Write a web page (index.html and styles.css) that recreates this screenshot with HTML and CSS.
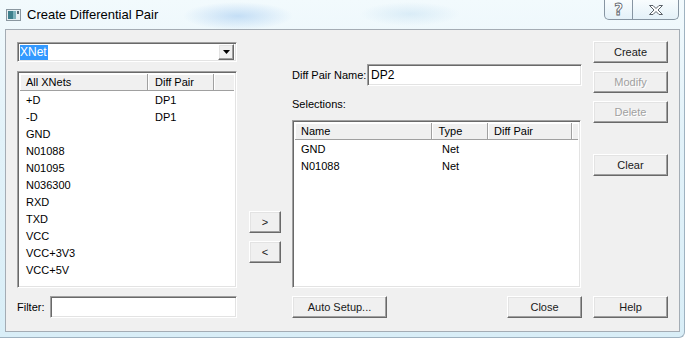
FILE: index.html
```html
<!DOCTYPE html>
<html>
<head>
    <link rel="stylesheet" href="styles.css">
</head>
<body>
    <div class="window">
        <div class="titlebar">
            <svg class="app-icon" width="15" height="12" viewBox="0 0 15 12">
                <rect x="0.5" y="0.5" width="14" height="11" fill="#e8eef2" stroke="#8a97a0"/>
                <rect x="2" y="2" width="5" height="8" fill="#3f7f8c"/>
                <rect x="7" y="2" width="3" height="8" fill="#7fb2bc"/>
                <rect x="11" y="2" width="2" height="3" fill="#5b6d78"/>
            </svg>
            <span class="title">Create Differential Pair</span>
            <div class="caption-buttons">
                <div class="cap-btn cap-help">?</div>
                <div class="cap-btn cap-close">
                    <svg width="16" height="12" viewBox="0 0 16 12">
                        <path d="M1.5 1.5 H5 L8 4.5 L11 1.5 H14.5 L10 6 L14.5 10.5 H11 L8 7.5 L5 10.5 H1.5 L6 6 Z" fill="#fff" stroke="#5a6168" stroke-width="1"/>
                    </svg>
                </div>
            </div>
        </div>

        <div class="client">
            <div class="col-left">
                <div class="combo sunken">
                    <span class="combo-text"><span class="selected">XNet</span></span>
                    <div class="combo-arrow raised">
                        <svg width="7" height="4" viewBox="0 0 7 4"><path d="M0 0 H7 L3.5 4 Z" fill="#000"/></svg>
                    </div>
                </div>

                <div class="listbox xnet-list sunken">
                    <div class="list-header">
                        <div class="hcell c-net">All XNets</div>
                        <div class="hcell c-pair">Diff Pair</div>
                        <div class="hcell c-fill"></div>
                    </div>
                    <div class="list-rows">
                        <div class="row"><span class="c-net">+D</span><span class="c-pair">DP1</span></div>
                        <div class="row"><span class="c-net">-D</span><span class="c-pair">DP1</span></div>
                        <div class="row"><span class="c-net">GND</span></div>
                        <div class="row"><span class="c-net">N01088</span></div>
                        <div class="row"><span class="c-net">N01095</span></div>
                        <div class="row"><span class="c-net">N036300</span></div>
                        <div class="row"><span class="c-net">RXD</span></div>
                        <div class="row"><span class="c-net">TXD</span></div>
                        <div class="row"><span class="c-net">VCC</span></div>
                        <div class="row"><span class="c-net">VCC+3V3</span></div>
                        <div class="row"><span class="c-net">VCC+5V</span></div>
                    </div>
                </div>

                <div class="filter-row">
                    <label class="filter-label">Filter:</label>
                    <div class="textbox filter-box sunken"></div>
                </div>
            </div>

            <div class="col-mid">
                <button class="btn small-btn raised">&gt;</button>
                <button class="btn small-btn raised">&lt;</button>
            </div>

            <div class="col-right">
                <div class="name-row">
                    <label class="name-label">Diff Pair Name:</label>
                    <div class="textbox name-box sunken">DP2</div>
                </div>
                <div class="sel-label">Selections:</div>

                <div class="listbox sel-list sunken">
                    <div class="list-header">
                        <div class="hcell c-name">Name</div>
                        <div class="hcell c-type">Type</div>
                        <div class="hcell c-spair">Diff Pair</div>
                        <div class="hcell c-fill"></div>
                    </div>
                    <div class="list-rows">
                        <div class="row"><span class="c-name">GND</span><span class="c-type">Net</span></div>
                        <div class="row"><span class="c-name">N01088</span><span class="c-type">Net</span></div>
                    </div>
                </div>

                <div class="bottom-row">
                    <button class="btn auto-btn raised">Auto Setup...</button>
                    <button class="btn raised">Close</button>
                </div>
            </div>

            <div class="col-buttons">
                <button class="btn raised">Create</button>
                <button class="btn raised" disabled>Modify</button>
                <button class="btn raised" disabled>Delete</button>
                <button class="btn clear-btn raised">Clear</button>
                <button class="btn help-btn raised">Help</button>
            </div>
        </div>
    </div>
</body>
</html>
```

FILE: styles.css
```css
body {
    margin: 0;
    width: 685px;
    height: 338px;
    overflow: hidden;
    font-family: 'Liberation Sans', Arial, sans-serif;
    font-size: 11px;
    color: #000;
}
.window {
    width: 685px;
    height: 338px;
    box-sizing: border-box;
    background:
        radial-gradient(ellipse 55px 14px at 238px 16px, rgba(160, 200, 240, 0.55), rgba(160, 200, 240, 0) 100%),
        radial-gradient(ellipse 50px 12px at 410px 14px, rgba(190, 220, 240, 0.45), rgba(190, 220, 240, 0) 100%),
        linear-gradient(180deg, #f2fafd 0%, #e2f2f9 40%, #d9eef7 100%);
    border-right: 1px solid #9fb2c0;
    border-bottom: 1px solid #9fb2c0;
    border-bottom-right-radius: 6px;
}

/* Title bar */
.titlebar {
    height: 29px;
    display: flex;
    align-items: flex-start;
    padding-left: 6px;
}
.app-icon {
    margin-top: 9px;
}
.title {
    margin-left: 6px;
    margin-top: 7px;
    font-size: 13px;
    line-height: 15px;
    color: #000;
}
.caption-buttons {
    margin-left: auto;
    margin-right: 5px;
    display: flex;
    height: 19px;
    border: 1px solid #8795a2;
    border-top: none;
    border-radius: 0 0 5px 5px;
    background: linear-gradient(180deg, rgba(255, 255, 255, 0.5), rgba(220, 236, 246, 0.6));
}
.cap-btn {
    display: flex;
    align-items: center;
    justify-content: center;
}
.cap-help {
    width: 27px;
    border-right: 1px solid #8795a2;
    font-weight: bold;
    font-size: 15px;
    color: #fff;
    -webkit-text-stroke: 0.8px #5a6168;
    font-family: 'DejaVu Sans', sans-serif;
}
.cap-close {
    width: 45px;
}

/* Client area */
.client {
    margin-left: 5px;
    width: 675px;
    height: 303px;
    box-sizing: border-box;
    border: 1px solid #a4acb4;
    background-color: #f0f0f0;
    padding: 11px 0 0 11px;
    display: flex;
    align-items: flex-start;
}

/* 3D borders */
.sunken {
    border: 1px solid;
    border-color: #a0a0a0 #fff #fff #a0a0a0;
    box-shadow: inset 1px 1px #696969, inset -1px -1px #e3e3e3;
    background-color: #fff;
}
.raised {
    border: 1px solid;
    border-color: #fff #696969 #696969 #fff;
    box-shadow: inset -1px -1px #a0a0a0, inset 1px 1px #e3e3e3;
    background-color: #f0f0f0;
}

.btn {
    font-family: 'Liberation Sans', Arial, sans-serif;
    font-size: 11px;
    font-weight: normal;
    color: #1a1a1a;
    height: 22px;
    width: 75px;
    padding: 0;
    box-sizing: border-box;
}
.btn:disabled {
    color: #a0a0a0;
    text-shadow: 1px 1px #fff;
}

/* Left column */
.col-left {
    width: 220px;
    display: flex;
    flex-direction: column;
}
.combo {
    margin-top: 1px;
    height: 20px;
    box-sizing: border-box;
    display: flex;
    align-items: center;
    padding: 2px;
}
.combo-text {
    flex: 1;
    line-height: 14px;
    font-size: 12px;
}
.selected {
    background-color: #3399ff;
    color: #fff;
    padding: 0 1px 1px 0;
}
.combo-arrow {
    width: 16px;
    height: 16px;
    box-sizing: border-box;
    display: flex;
    align-items: center;
    justify-content: center;
}

.listbox {
    box-sizing: border-box;
    padding: 2px;
    display: flex;
    flex-direction: column;
}
.xnet-list {
    margin-top: 9px;
    height: 217px;
}
.list-header {
    display: flex;
    height: 17px;
    box-sizing: border-box;
    flex-shrink: 0;
}
.hcell {
    box-sizing: border-box;
    height: 17px;
    line-height: 16px;
    padding-left: 6px;
    background-color: #f0f0f0;
    border-right: 1px solid #a0a0a0;
    border-bottom: 1px solid #a0a0a0;
    box-shadow: inset 1px 1px #fff;
    white-space: nowrap;
}
.hcell.c-fill {
    flex: 1;
    border-right: none;
}
.list-rows {
    padding-top: 1px;
}
.row {
    display: flex;
    height: 17px;
    line-height: 17px;
    white-space: nowrap;
}
.row span {
    box-sizing: border-box;
    padding-left: 6px;
}
.c-net { width: 128px; }
.c-pair { width: 66px; padding-left: 7px !important; }

.filter-row {
    margin-top: 8px;
    display: flex;
    align-items: center;
}
.filter-label {
    width: 33px;
}
.textbox {
    box-sizing: border-box;
    height: 22px;
    padding: 2px 3px;
    line-height: 16px;
    font-size: 12px;
}
.filter-box {
    flex: 1;
}

/* Middle column */
.col-mid {
    margin-left: 12px;
    width: 32px;
    padding-top: 170px;
    display: flex;
    flex-direction: column;
    gap: 8px;
}
.small-btn {
    width: 32px;
}

/* Right column */
.col-right {
    margin-left: 11px;
    width: 290px;
    display: flex;
    flex-direction: column;
}
.name-row {
    margin-top: 23px;
    display: flex;
    align-items: center;
}
.name-label {
    flex: 1;
    white-space: nowrap;
}
.name-box {
    width: 215px;
    flex-shrink: 0;
}
.sel-label {
    margin-top: 12px;
    line-height: 12px;
}
.sel-list {
    margin-top: 10px;
    height: 168px;
    width: 289px;
}
.c-name { width: 141px; }
.c-type { width: 57px; }
.c-spair { width: 86px; }
.bottom-row {
    margin-top: 8px;
    display: flex;
    justify-content: space-between;
}
.auto-btn {
    width: 95px;
}

/* Button column */
.col-buttons {
    margin-left: 11px;
    width: 75px;
    height: 277px;
    display: flex;
    flex-direction: column;
    gap: 8px;
}
.clear-btn {
    margin-top: 23px;
}
.help-btn {
    margin-top: auto;
}
```
